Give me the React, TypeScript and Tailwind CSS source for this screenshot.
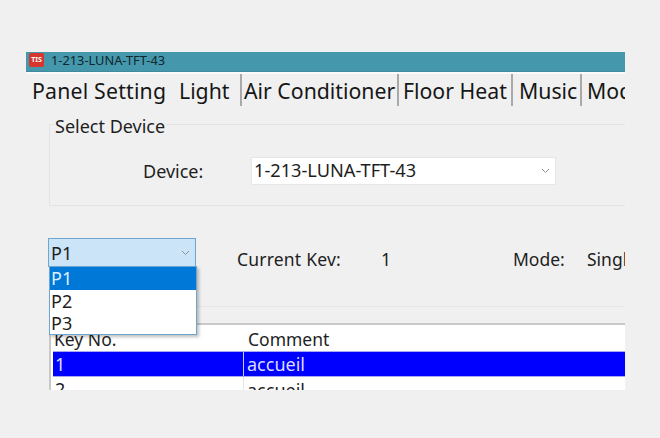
const font = { fontFamily: '"Noto Sans", "Open Sans", sans-serif' };

function Chevron() {
  return (
    <svg width="9" height="6" viewBox="0 0 9 6" fill="none" stroke="#8a9299" strokeWidth="1">
      <path d="M1 1l3.5 3.5L8 1" />
    </svg>
  );
}

function Tab({ label, className }: { label: string; className: string }) {
  return (
    <div className={`${className} shrink-0 h-[32px] flex items-center whitespace-nowrap text-[21.25px] text-[#161616]`}>
      <span className="mt-[2px]">{label}</span>
    </div>
  );
}

export default function App() {
  return (
    <div style={font} className="w-[660px] h-[438px] bg-[#f0f0f0] pt-[52px] pl-[26px] overflow-hidden">
      <div className="w-[599px] h-[338px] overflow-hidden flex flex-col bg-[#f0f0f0]">
        <div className="h-[20px] shrink-0 bg-[#4598ac] flex items-start pl-[3px] gap-[7px] border-b border-[#3f8a9c]">
          <div className="w-[15px] h-[14px] mt-[1px] rounded-[2px] bg-[#d8362c] text-white text-[7px] font-bold leading-[14px] text-center">TIS</div>
          <span className="text-[12.8px] mt-[1px] text-[#10262c] leading-[14px]">1-213-LUNA-TFT-43</span>
        </div>
        <div className="h-[2px] shrink-0 bg-[#fafafa]" />
        <div className="h-[32px] shrink-0 flex items-center">
          <Tab label="Panel Setting" className="w-[149px] pl-[6px] tracking-[0.2px]" />
          <Tab label="Light" className="w-[67px] pl-[4px] border-r-2 border-[#a9a9a9]" />
          <Tab label="Air Conditioner" className="w-[157px] pl-[2px] border-r-2 border-[#a9a9a9]" />
          <Tab label="Floor Heat" className="w-[114px] pl-[4px] border-r-2 border-[#a9a9a9]" />
          <Tab label="Music" className="w-[69px] pl-[6px] border-r-2 border-[#a9a9a9]" />
          <Tab label="Mode" className="w-[60px] pl-[5px]" />
        </div>

        <div className="relative flex-1 flex flex-col pl-[23px]">
          <div className="relative h-[82px] -mr-[10px] border border-r-0 border-[#e4e4e4] mt-[18px] shrink-0 flex items-center">
            <span className="absolute left-[4px] -top-[10px] px-[1px] bg-[#f0f0f0] text-[18px] leading-[22px] text-[#1e1e1e]">Select Device</span>
            <div className="flex items-center mt-[12px]">
              <span className="w-[201px] pl-[93px] shrink-0 text-[18px] text-[#1e1e1e]">Device:</span>
              <div className="w-[305px] h-[28px] shrink-0 bg-white border border-[#e6e6e6] flex items-center justify-between pl-[2px] pr-[5px] text-[18.2px] text-[#1e1e1e]">
                <span>1-213-LUNA-TFT-43</span>
                <Chevron />
              </div>
            </div>
          </div>

          <div className="flex items-start mt-[32px] h-[29px] shrink-0 text-[17.5px] text-[#1e1e1e] whitespace-nowrap">
            <div className="w-[148px] h-[29px] shrink-0 -ml-[1px] bg-[#cce4f7] border border-[#6ea6d0] flex items-center justify-between pl-[2px] pr-[5px] text-[18px]">
              <span className="mt-[2px]">P1</span>
              <Chevron />
            </div>
            <span className="ml-[41px] w-[144px] shrink-0 mt-[8px] leading-[26px] tracking-[0.2px]">Current Kev:</span>
            <span className="w-[132px] shrink-0 mt-[8px] leading-[26px]">1</span>
            <span className="w-[74px] shrink-0 mt-[8px] leading-[26px]">Mode:</span>
            <span className="shrink-0 mt-[8px] leading-[26px]">Single</span>
          </div>

          <div className="mt-[39px] h-[17px] shrink-0 border-t border-[#e6e6e6]" />

          <div className="flex-1 bg-white border-t-2 border-l-2 border-[#c9c9c9] pl-[2px] text-[18px] text-[#1e1e1e] overflow-hidden leading-[24px]">
            <div className="flex h-[26px] items-end text-[17.5px]">
              <span className="w-[191px] pl-[1px]">Key No.</span>
              <span className="pl-[4px]">Comment</span>
            </div>
            <div className="flex h-[26px] items-center bg-[#0000ff] text-[#dcdcff] border-y border-[#a8a8ee]">
              <span className="w-[191px] pl-[2px] border-r border-[#c8c8f0] h-full">1</span>
              <span className="pl-[3px]">accueil</span>
            </div>
            <div className="flex h-[26px] items-center">
              <span className="w-[191px] pl-[2px] border-r border-[#e4e4e4] h-full">2</span>
              <span className="pl-[3px]">accueil</span>
            </div>
          </div>

          <div className="absolute left-[23px] top-[160px] w-[148px] h-[69px] bg-white border border-[#6ea6d0] shadow-[2px_2px_3px_rgba(0,0,0,0.25)] text-[18px] leading-[22px] text-[#1e1e1e]">
            <div className="h-[23px] bg-[#0078d7] text-[#dff0ff] pl-[1px]">P1</div>
            <div className="h-[22px] pl-[1px]">P2</div>
            <div className="h-[22px] pl-[1px]">P3</div>
          </div>
        </div>
      </div>
    </div>
  );
}
